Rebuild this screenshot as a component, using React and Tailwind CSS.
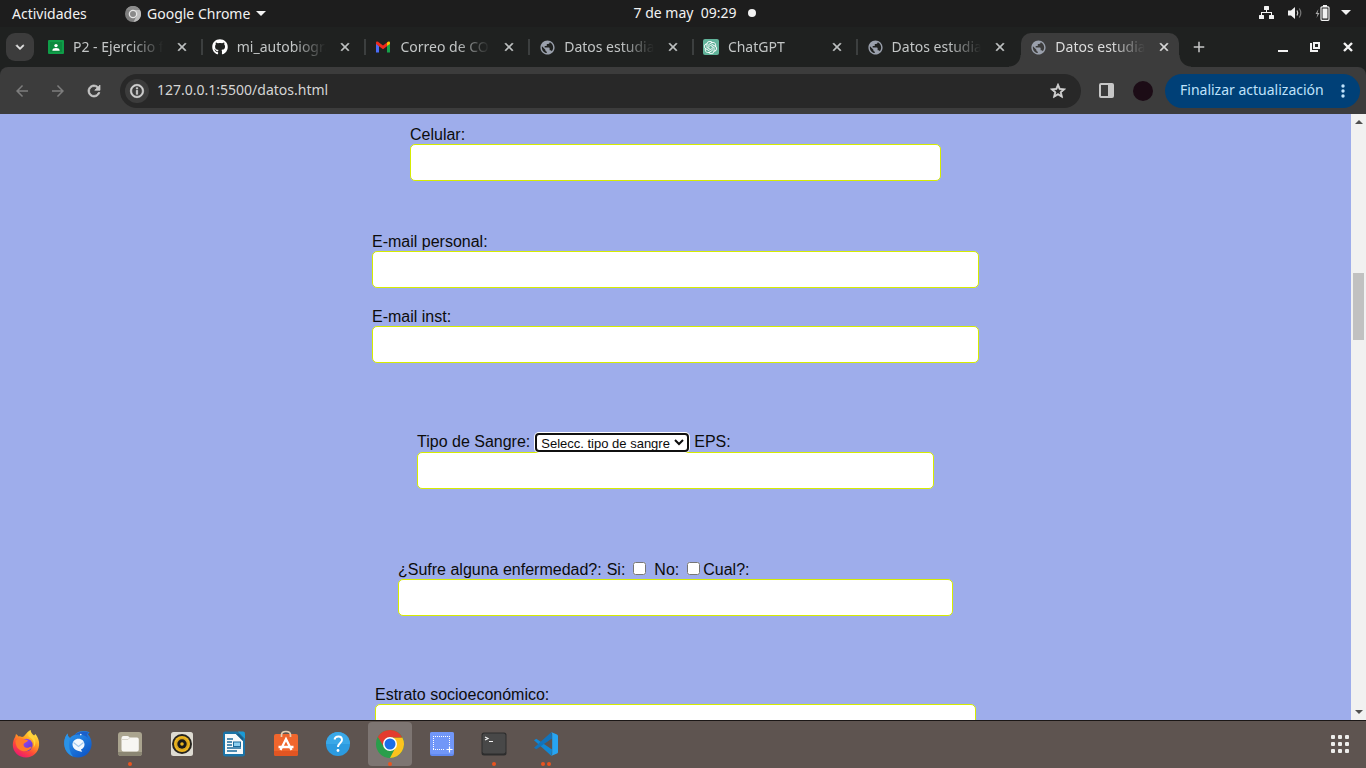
import React from 'react';
import { FaGithub } from 'react-icons/fa';
import { SiOpenai } from 'react-icons/si';
import { MdPublic, MdClose, MdAdd, MdArrowBack, MdArrowForward, MdRefresh, MdInfoOutline, MdStarBorder, MdKeyboardArrowDown } from 'react-icons/md';

const Globe = () => <MdPublic size={17} className="text-[#9aa0ac]" />;

// Material icons carry an unfilled bounding path that must stay unstroked.
const Bold = ({ icon: Icon, size }) => (
  <Icon size={size} stroke="currentColor" strokeWidth={1} className="[&>path[fill=none]]:stroke-none" />
);

const Classroom = () => (
  <svg width="16" height="16" viewBox="0 0 16 16">
    <rect x="0" y="1" width="16" height="14" rx="1" fill="#0f9d48" />
    <rect x="2" y="3" width="12" height="10" fill="#0b8a3e" />
    <circle cx="8" cy="6.6" r="1.7" fill="#fff" />
    <path d="M4.3 11.7c0-2 1.7-2.7 3.7-2.7s3.7.7 3.7 2.7z" fill="#fff" />
  </svg>
);

const Gmail = () => (
  <svg width="16" height="16" viewBox="0 0 16 16">
    <path d="M1 4v9.500h3V7L1 4z" fill="#4a6cf7" />
    <path d="M12 7v6.500h3V4z" fill="#16a34a" />
    <path d="M12 3.6V7l3-2V4c0-1.500-1.600-2-3-.4z" fill="#fbbc04" />
    <path d="M4 3.600C2.600 2 1 2.500 1 4v1l3 2.200 4 3 4-3V3.600L8 6.600z" fill="#ee2b1d" />
  </svg>
);

const ChatGpt = () => (
  <span className="flex size-4 items-center justify-center rounded-[2px] bg-[#61b39a] text-white">
    <SiOpenai size={13} />
  </span>
);

const GrayChrome = () => (
  <svg width="16" height="16" viewBox="0 0 16 16">
    <circle cx="8" cy="8" r="8" fill="#7e7e7e" />
    <path d="M8 4h7a8 8 0 0 1-6.500 12L11.500 10z" fill="#bdbdbd" />
    <path d="M1 4a8 8 0 0 1 14 0H8z" fill="#8c8c8c" />
    <circle cx="8" cy="8" r="4.300" fill="#e6e6e6" />
    <circle cx="8" cy="8" r="3" fill="#8a8a8a" />
  </svg>
);

const Caret = () => (
  <svg width="10" height="5" viewBox="0 0 10 5"><path d="M0 0h10L5 5z" fill="#f2f2f2" /></svg>
);

const tabs = [
  { title: 'P2 - Ejercicio f', Icon: Classroom },
  { title: 'mi_autobiogra', Icon: () => <FaGithub size={16} className="text-white" /> },
  { title: 'Correo de COR', Icon: Gmail },
  { title: 'Datos estudian', Icon: Globe },
  { title: 'ChatGPT', Icon: ChatGpt },
  { title: 'Datos estudian', Icon: Globe },
  { title: 'Datos estudian', Icon: Globe, active: true },
];

function SystemBar() {
  return (
    <header className="grid h-[27px] shrink-0 grid-cols-[1fr_auto_1fr] items-center bg-[#1d1d1d] text-[14px] text-[#f2f2f2]">
      <div className="flex items-center pl-3">
        <button className="w-[113px] text-left">Actividades</button>
        <button className="flex items-center gap-1.5"><GrayChrome />Google Chrome<Caret /></button>
      </div>
      <button className="flex items-center pb-0.5 pl-6">
        <span className="whitespace-pre">7 de may  09:29</span>
        <span className="ml-3 size-2 rounded-full bg-[#f2f2f2]" />
      </button>
      <button className="flex items-center justify-end pr-[15px] pb-0.5" aria-label="Sistema">
        <svg width="16" height="14" viewBox="0 0 16 14" fill="#f2f2f2">
          <rect x="5" y="0" width="5" height="4" rx=".5" />
          <rect x="0" y="9" width="5" height="4" rx=".5" /><rect x="10" y="9" width="5" height="4" rx=".5" />
          <path d="M7 4h1v2h5v3h-1V7H3v2H2V6h5z" />
        </svg>
        <svg className="ml-3" width="16" height="14" viewBox="0 0 16 14" fill="none">
          <path d="M1 4.500h3L8 1v12L4 9.500H1z" fill="#f2f2f2" />
          <path d="M10 4.500q1.600 2.500 0 5" stroke="#d0d0d0" strokeWidth="1.200" />
          <path d="M12.300 2.500q3 4.500 0 9" stroke="#777" strokeWidth="1.200" />
        </svg>
        <svg className="ml-3" width="15" height="16" viewBox="0 0 15 16">
          <path d="M3.500 4L.5 9h2L1.500 13l3-5h-2z" fill="#aaa" />
          <rect x="8" y="0" width="4" height="2" fill="#f2f2f2" />
          <rect x="6" y="1.800" width="8" height="13.500" rx="1" fill="none" stroke="#f2f2f2" strokeWidth="1.200" />
          <rect x="7.500" y="3.500" width="5" height="10" fill="#f2f2f2" />
        </svg>
        <span className="ml-[11px]"><Caret /></span>
      </button>
    </header>
  );
}

function Tab({ title, Icon, active, divider }) {
  return (
    <div className="flex h-full min-w-0 flex-1 items-center">
      <div className={`relative flex h-full min-w-0 flex-1 items-center rounded-t-[10px] pr-2 pl-[9px] ${active ? 'bg-[#3c3c3c] text-[#dcdcdc]' : 'text-[#c3c6c6]'}`}>
        {active && (
          <>
            <span className="absolute bottom-0 -left-3 size-3 bg-[radial-gradient(circle_at_0_0,transparent_11px,#3c3c3c_12px)]" />
            <span className="absolute -right-3 bottom-0 size-3 bg-[radial-gradient(circle_at_100%_0,transparent_11px,#3c3c3c_12px)]" />
          </>
        )}
        <span className="flex w-[25px] shrink-0 pb-1.5"><Icon /></span>
        <span className="min-w-0 flex-1 overflow-hidden pb-2 whitespace-nowrap [mask-image:linear-gradient(to_right,#000_62%,transparent_98%)]">{title}</span>
        <button className="ml-2.5 shrink-0 pb-1.5" aria-label="Cerrar pestaña"><Bold icon={MdClose} size={14} /></button>
      </div>
      <span className={`mb-1.5 ml-1 h-4 w-[2px] shrink-0 ${divider ? 'bg-[#3c3f3f]' : ''}`} />
    </div>
  );
}

function TabStrip() {
  return (
    <div className="flex h-10 shrink-0 items-end bg-[#1f2120] text-[14px]">
      <button className="mb-1.5 ml-1.5 flex size-7 shrink-0 items-center justify-center rounded-[9px] bg-[#3c3c3c] text-[#e3e3e3]" aria-label="Buscar pestañas">
        <Bold icon={MdKeyboardArrowDown} size={16} />
      </button>
      <nav className="ml-[5px] flex h-[34px] max-w-[1146px] min-w-0 flex-1">
        {tabs.map((t, i) => <Tab key={i} {...t} divider={i < 5} />)}
      </nav>
      <button className="mb-[11px] ml-[5px] text-[#c7c7c7]" aria-label="Nueva pestaña"><MdAdd size={18} /></button>
      <div className="mr-3 mb-[14px] ml-auto flex items-center gap-[22px]">
        <button aria-label="Minimizar"><svg width="10" height="12" viewBox="0 0 10 12"><rect y="9" width="10" height="2" fill="#f2f2f2" /></svg></button>
        <button aria-label="Restaurar"><svg width="10" height="12" viewBox="0 0 10 12" fill="none" stroke="#f2f2f2" strokeWidth="2"><rect x="4" y="2" width="5" height="5" /><path d="M1 2v8h7" /></svg></button>
        <button aria-label="Cerrar"><svg width="12" height="12" viewBox="0 0 12 12"><path d="M2 2l8 8M10 2l-8 8" stroke="#f2f2f2" strokeWidth="2.400" /></svg></button>
      </div>
    </div>
  );
}

function Toolbar() {
  return (
    <div className="shrink-0 bg-[#1f2120]">
      <div className="flex h-[47px] items-center rounded-t-[8px] bg-[#3c3c3c] pr-1.5 pl-[13px] text-[14px]">
        <div className="flex gap-[18px]">
          <button aria-label="Atrás" className="text-[#7d7d7d]"><MdArrowBack size={18} /></button>
          <button aria-label="Adelante" className="text-[#7d7d7d]"><MdArrowForward size={18} /></button>
          <button aria-label="Recargar" className="text-[#c7c7c7]"><Bold icon={MdRefresh} size={18} /></button>
        </div>
        <div className="ml-[17px] flex h-[34px] flex-1 items-center rounded-full bg-[#282828] pr-[14px] pl-[5px] text-[#d5d5d5]">
          <button className="flex size-6 items-center justify-center rounded-full bg-[#3c3c3c]" aria-label="Información del sitio"><Bold icon={MdInfoOutline} size={16} /></button>
          <input aria-label="Dirección" defaultValue="127.0.0.1:5500/datos.html" className="ml-2 min-w-0 flex-1 bg-transparent pb-0.5 outline-none" />
          <button aria-label="Favorito"><Bold icon={MdStarBorder} size={18} /></button>
        </div>
        <button className="ml-[18px]" aria-label="Panel lateral">
          <svg width="15" height="15" viewBox="0 0 15 15"><rect x="1" y="1" width="13" height="13" rx="1" fill="none" stroke="#c7c7c7" strokeWidth="2" /><rect x="9" y="1" width="5" height="13" fill="#c7c7c7" /></svg>
        </button>
        <button className="ml-[19px] size-5 rounded-full bg-[#1c0c16]" aria-label="Perfil" />
        <button className="ml-3 flex h-[34px] w-[195px] items-center justify-between rounded-full bg-[#004077] pr-[15px] pl-[15px] whitespace-nowrap text-[#bfe2fb]">
          <span className="pb-0.5">Finalizar actualización</span>
          <svg width="4" height="14" viewBox="0 0 4 14" fill="#bfe2fb"><circle cx="2" cy="2" r="1.700" /><circle cx="2" cy="7" r="1.700" /><circle cx="2" cy="12" r="1.700" /></svg>
        </button>
      </div>
    </div>
  );
}

const field = 'block h-[37px] w-full rounded-[5px] border border-[#d6ec00] bg-white px-2 outline-none';

function Field({ id, label, type = 'text' }) {
  return (
    <div>
      <label htmlFor={id} className="block">{label}</label>
      <input id={id} type={type} className={field} />
    </div>
  );
}

function StudentForm() {
  return (
    <form className="flex min-w-0 flex-1 flex-col items-center overflow-hidden pt-3 font-['Liberation_Sans',Arial,sans-serif] text-[16px] leading-[18px] text-[#0c0c0c]">
      <div className="w-full max-w-[531px] shrink-0"><Field id="celular" label="Celular:" type="tel" /></div>
      <div className="mt-[52px] flex w-full max-w-[607px] shrink-0 flex-col gap-5">
        <Field id="email" label="E-mail personal:" type="email" />
        <Field id="emailinst" label="E-mail inst:" type="email" />
      </div>
      <div className="mt-[70px] w-full max-w-[517px] shrink-0">
        <div className="flex h-[19px] items-start gap-[5px]">
          <label htmlFor="sangre">Tipo de Sangre:</label>
          <select id="sangre" className="h-[19px] w-[154px] rounded-[4px] border-2 border-[#101010] bg-white text-[13px] leading-[15px] ring-1 ring-white outline-none">
            <option>Selecc. tipo de sangre</option>
          </select>
          <label htmlFor="eps">EPS:</label>
        </div>
        <input id="eps" className={field} />
      </div>
      <div className="mt-[72px] w-full max-w-[555px] shrink-0">
        <div className="flex items-center">
          <span>¿Sufre alguna enfermedad?:</span>
          <label htmlFor="si" className="ml-[5px]">Si:</label>
          <input id="si" type="checkbox" className="mb-1 ml-2 size-[13px]" />
          <label htmlFor="no" className="ml-2">No:</label>
          <input id="no" type="checkbox" className="mb-1 ml-2 size-[13px]" />
          <label htmlFor="cual" className="ml-[3px]">Cual?:</label>
        </div>
        <input id="cual" className={field} />
      </div>
      <div className="mt-[70px] w-full max-w-[601px] shrink-0"><Field id="estrato" label="Estrato socioeconómico:" /></div>
    </form>
  );
}

function Scrollbar() {
  return (
    <div className="flex w-[15px] shrink-0 flex-col items-center bg-[#f1f1f1] py-1.5" aria-hidden="true">
      <svg width="8" height="4" viewBox="0 0 8 4"><path d="M0 4h8L4 0z" fill="#505050" /></svg>
      <div className="flex w-full flex-1 flex-col items-center">
        <div className="grow-[149]" />
        <div className="h-[67px] w-[11px] bg-[#c1c1c1]" />
        <div className="grow-[370]" />
      </div>
      <svg width="8" height="4" viewBox="0 0 8 4"><path d="M0 0h8L4 4z" fill="#505050" /></svg>
    </div>
  );
}

const Firefox = () => (
  <svg width="28" height="28" viewBox="0 0 28 28">
    <defs>
      <linearGradient id="ff" x1=".8" y1="0" x2=".2" y2="1"><stop offset="0" stopColor="#fff44f" /><stop offset=".35" stopColor="#ffa51f" /><stop offset=".65" stopColor="#ff4b38" /><stop offset="1" stopColor="#e8107a" /></linearGradient>
      <linearGradient id="ffp" x1="0" y1="0" x2="1" y2="1"><stop offset="0" stopColor="#a24bff" /><stop offset="1" stopColor="#5a36c8" /></linearGradient>
    </defs>
    <path d="M18.500 0c.2 2.700 2 4 3.600 5.500l1.300-1.400c2.600 3 4.100 7 3.700 11.200C26.500 22.500 21 27.500 14 27.500S.8 22 .8 15c0-3 1-6 2.400-8.200L4 4c1 .6 1.700 1.600 2.500 2.400 1.300-.2 2.500 0 3.500.6 3-.2 4-4.700 8.500-7z" fill="url(#ff)" />
    <circle cx="14.300" cy="15" r="6.300" fill="url(#ffp)" />
    <path d="M3.500 11c2-3 5.500-3.500 8-2 1.500.8 3.500.6 4.500 1.500-.6 1.800-3.300 2-4.200 3.200-.7 1.500.5 4 3 4 2.500.1 3-1.600 5-.9-1.600 3.300-5 5-8.600 4.400C6.500 20.500 3.500 16.500 3.500 11z" fill="#ff7b2b" />
    <path d="M17 7c4 1.500 6 6 4.500 10.500 3-3 2.500-9-1-12-2-1.700-2.700-3.300-2-5.500-2 2-3 5-1.500 7z" fill="#ffd43a" />
  </svg>
);
const Thunderbird = () => (
  <svg width="28" height="28" viewBox="0 0 28 28">
    <defs><linearGradient id="tb" x1=".1" y1="0" x2=".9" y2="1"><stop offset="0" stopColor="#2f9cf0" /><stop offset="1" stopColor="#0b50c4" /></linearGradient></defs>
    <path d="M3.500 3.500C1 6.500 0 10.500.3 14.500.8 22 6.500 27.500 14 27.500c7.300 0 12.600-5.300 13.500-12 .6-4.500-1-8.500-3.500-11 .3-1 .8-1.600 1.600-2.200C20-.2 13.500 1 10.500 5 8.500 5.500 7 6.500 6 8 4.500 7 3.700 5.500 3.500 3.500z" fill="url(#tb)" />
    <path d="M10.500 5C14 1.500 20 .5 24.500 2.500c-.8.700-1.200 1.300-1.500 2.200l1 3.300c-3-3-8-4.500-13.500-3z" fill="#1b5fc9" />
    <circle cx="16.800" cy="4.600" r=".8" fill="#fff" />
    <path d="M8.500 14.500c0-3.200 2.600-5.700 6-5.700s6 2.400 6 5.700c0 2.300-1.400 4.200-3.600 5l1.300 2.300c-4.700-.5-9.700-2.800-9.700-7.300z" fill="#f1f7fe" />
    <path d="M9.500 12.500l5 4 5-4" fill="none" stroke="#a3c9ee" strokeWidth="1.200" />
    <path d="M3.500 3.500C1 6.500 0 10.500.3 14.500.7 20 4 24.500 9 26.500 5.500 22 4 15 6 8 4.500 7 3.700 5.500 3.500 3.500z" fill="#2a93e8" />
  </svg>
);
const Files = () => (
  <svg width="26" height="26" viewBox="0 0 26 26">
    <rect x="1" y="1" width="24" height="24" rx="3" fill="#aaa48f" /><path d="M1 22q0 3 3 3h18q3 0 3-3v-1H1z" fill="#8b8673" />
    <path d="M4.500 7q0-2 2-2h4q1.500 0 2 1.500H20q1.800 0 1.800 2v10q0 2-2 2H6.500q-2 0-2-2z" fill="#f7f6f3" /><path d="M4.500 8.500h6.500l2-2" fill="none" stroke="#d8d5cc" />
  </svg>
);
const Rhythmbox = () => (
  <svg width="24" height="26" viewBox="0 0 24 26">
    <rect x="1" y="1" width="22" height="24" rx="2.500" fill="#dedbd2" /><circle cx="12" cy="13" r="10" fill="#26241f" /><circle cx="12" cy="13" r="8" fill="#f0b81f" /><circle cx="12" cy="13" r="6.500" fill="#dba61e" /><circle cx="12" cy="13" r="4.700" fill="#191919" /><circle cx="12" cy="13" r="1.800" fill="#e8b420" />
  </svg>
);
const Writer = () => (
  <svg width="24" height="26" viewBox="0 0 24 26">
    <path d="M1 3q0-2.500 2.500-2.500H15L23 8v15q0 2.500-2.500 2.500h-17Q1 25.500 1 23z" fill="#1b74a8" /><path d="M3 3h11l7 7v13H3z" fill="#f7f9fa" /><path d="M14 3l7 7v-3l-4-4z" fill="#165d88" /><path d="M15.500.5H21q2 0 2 2V8z" fill="#1a9bd7" />
    <path d="M5 8h6M5 11h5M5 14h5M5 17h14M5 20h10" stroke="#1b6a9a" strokeWidth="1.400" /><rect x="11.500" y="11" width="7" height="4.500" fill="#8dcff0" stroke="#1b6a9a" />
  </svg>
);
const Software = () => (
  <svg width="26" height="28" viewBox="0 0 26 28">
    <rect x="1" y="4" width="24" height="22" rx="2" fill="#f0662d" /><path d="M1 21h24v3q0 2-2 2H3q-2 0-2-2z" fill="#e25522" />
    <path d="M8.500 7V5q0-3.500 4.500-3.500T17.500 5v2" fill="none" stroke="#e5ceb2" strokeWidth="1.700" />
    <path d="M7.500 20L13 9l5.500 11M5.500 17h15" fill="none" stroke="#fff" strokeWidth="2.300" />
  </svg>
);
const Help = () => (
  <svg width="26" height="26" viewBox="0 0 26 26">
    <circle cx="13" cy="13" r="12" fill="#2c9be0" /><path d="M1 13a12 12 0 0 1 24 0z" fill="#3aa8e8" />
    <path d="M9.500 8.500q.5-3 4-3T17 9c0 3-4 3.200-4 7" fill="none" stroke="#fff" strokeWidth="1.900" /><circle cx="13" cy="19.500" r="1.400" fill="#fff" />
  </svg>
);
const Chrome = () => (
  <svg width="28" height="28" viewBox="0 0 28 28">
    <circle cx="14" cy="14" r="14" fill="#2a9e4b" />
    <path d="M14 7.500h12.400A14 14 0 0 1 14 28l5.600-10.700z" fill="#fcc31e" />
    <path d="M1.900 7A14 14 0 0 1 26.300 7.500H14c-3 0-5.300 1.600-6.200 4.500L8 17z" fill="#e33b2e" />
    <circle cx="14" cy="14" r="7" fill="#fff" /><circle cx="14" cy="14" r="5.500" fill="#1a6ee8" />
  </svg>
);
const Screenshot = () => (
  <svg width="26" height="26" viewBox="0 0 26 26">
    <rect x="1" y="1" width="24" height="24" rx="2" fill="#6189f0" /><rect x="1" y="1" width="24" height="22" rx="2" fill="#7197f8" />
    <path d="M4 5.500h17M4 18.500h12M4.500 5v14M20.500 5v10" fill="none" stroke="#fff" strokeDasharray="1 1" /><path d="M20.500 15.500v6M17.500 18.500h6" stroke="#fff" strokeWidth="1.200" />
  </svg>
);
const Terminal = () => (
  <svg width="26" height="24" viewBox="0 0 26 24">
    <rect x=".5" y=".5" width="25" height="23" rx="2.500" fill="#2d2d2d" /><rect x="1.500" y="1.500" width="23" height="20" rx="2" fill="#484848" />
    <path d="M4 5l3 1.500L4 8M8 9.500h4" fill="none" stroke="#f2f2f2" strokeWidth="1.200" />
  </svg>
);
const VsCode = () => (
  <svg width="26" height="26" viewBox="0 0 26 26">
    <path d="M3.300 7.800L1 9.200 18.500 25l.5-6.500z" fill="#1088d6" />
    <path d="M18.500 1L1 16.800l2.300 1.500L19 7.500z" fill="#1273bb" />
    <path d="M18 1l6 2.500q1 .5 1 1.500v16q0 1-1 1.500L18 25q1.200-.5 1.200-2V3q0-1.500-1.200-2z" fill="#27a5f2" />
  </svg>
);

const apps = [
  ['Firefox', Firefox, 0], ['Thunderbird', Thunderbird, 0], ['Archivos', Files, 1], ['Rhythmbox', Rhythmbox, 0],
  ['Writer', Writer, 0], ['Software', Software, 0], ['Ayuda', Help, 0], ['Google Chrome', Chrome, 1],
  ['Captura', Screenshot, 0], ['Terminal', Terminal, 1], ['VS Code', VsCode, 2],
];

function Dock() {
  return (
    <footer className="flex h-12 shrink-0 items-start justify-between border-t border-[#1b1716] bg-[#5e5450] px-1 pt-px">
      <div className="flex gap-2">
        {apps.map(([name, Icon, windows]) => (
          <button key={name} aria-label={name} className={`relative flex size-11 items-center justify-center rounded-[4px] ${name === 'Google Chrome' ? 'bg-[#7d7572]' : ''}`}>
            <Icon />
            <span className="absolute inset-x-0 bottom-0 flex justify-center gap-0.5">
              {Array.from({ length: windows }, (_, i) => <i key={i} className="size-1 rounded-full bg-[#e95420]" />)}
            </span>
          </button>
        ))}
      </div>
      <button aria-label="Mostrar aplicaciones" className="flex size-11 items-center justify-center">
        <span className="grid grid-cols-3 gap-[3px]">
          {Array.from({ length: 9 }, (_, i) => <i key={i} className="size-1 rounded-[1px] bg-[#eeeeec]" />)}
        </span>
      </button>
    </footer>
  );
}

export default function App() {
  return (
    <div className="flex h-screen flex-col overflow-hidden font-['Noto_Sans',sans-serif]">
      <SystemBar />
      <TabStrip />
      <Toolbar />
      <main className="flex min-h-0 flex-1 bg-[#9eadeb]">
        <StudentForm />
        <Scrollbar />
      </main>
      <Dock />
    </div>
  );
}
